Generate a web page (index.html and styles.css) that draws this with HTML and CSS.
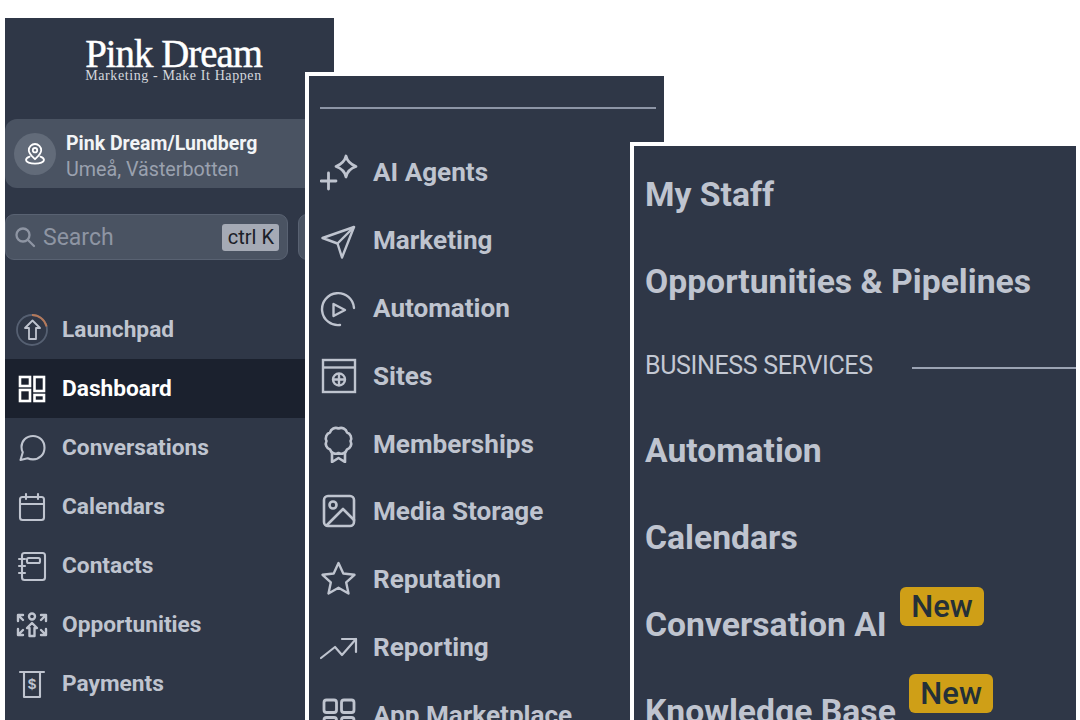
FILE: index.html
```html
<!DOCTYPE html>
<html lang="en">
<head>
    <meta charset="UTF-8">
    <meta name="viewport" content="width=device-width, initial-scale=1.0">
    <title>Pink Dream Menu</title>
    <link rel="stylesheet" href="styles.css">
</head>
<body>
    <!-- first window: top of the sidebar -->
    <div class="panel panel-one">
        <div class="logo">
            <div class="logo-name">Pink Dream</div>
            <div class="logo-tag">Marketing - Make It Happen</div>
        </div>
        <div class="account">
            <div class="account-icon">
                <svg width="22" height="24" viewBox="0 0 22 24" fill="none" stroke="currentColor" stroke-width="1.800" stroke-linecap="round" stroke-linejoin="round">
                    <path d="M11 2a6.200 6.200 0 0 0-6.200 6.200c0 3.600 3.400 6.200 6.200 9 2.800-2.800 6.200-5.400 6.200-9A6.200 6.200 0 0 0 11 2z"/>
                    <circle cx="11" cy="8.200" r="2.200"/>
                    <path d="M5.600 14.600C3.400 15.400 2 16.600 2 18c0 2 4 3.600 9 3.600s9-1.600 9-3.600c0-1.400-1.400-2.600-3.600-3.400"/>
                </svg>
            </div>
            <div class="account-text">
                <div class="account-name">Pink Dream/Lundberg</div>
                <div class="account-place">Umeå, Västerbotten</div>
            </div>
        </div>
        <div class="search-row">
            <div class="search">
                <svg width="24" height="24" viewBox="0 0 24 24" fill="none" stroke="currentColor" stroke-width="2.300" stroke-linecap="round">
                    <circle cx="10" cy="10" r="6.500"/>
                    <path d="M15 15l6 6"/>
                </svg>
                <span class="search-text">Search</span>
                <span class="kbd">ctrl K</span>
            </div>
            <div class="search-btn"></div>
        </div>
        <nav class="nav-one">
            <a class="row-one">
                <svg class="icon" viewBox="0 0 32 32" fill="none" stroke="currentColor" stroke-width="1.800" stroke-linejoin="round">
                    <circle cx="16" cy="16" r="15" stroke="#566072"/>
                    <path d="M16 1a15 15 0 0 1 14.600 11.500" stroke="#b5795a"/>
                    <path d="M16.500 6.500l7.500 7.500h-4v11h-7V14H9z"/>
                </svg>
                Launchpad
            </a>
            <a class="row-one active">
                <svg class="icon" viewBox="0 0 32 32" fill="none" stroke="currentColor" stroke-width="2.600">
                    <rect x="4" y="4" width="10" height="9"/>
                    <rect x="18.500" y="4" width="9.500" height="14"/>
                    <rect x="4" y="17" width="10" height="11"/>
                    <rect x="18.500" y="22" width="9.500" height="6"/>
                </svg>
                Dashboard
            </a>
            <a class="row-one">
                <svg class="icon" viewBox="0 0 32 32" fill="none" stroke="currentColor" stroke-width="2.100" stroke-linejoin="round">
                    <path d="M17 4C10 4 5.500 9 5.500 15c0 2 .5 3.800 1.300 5.300L4.500 28l7.200-1.800c1.600.8 3.400 1.200 5.300 1.200 6.500 0 11.500-5 11.500-11.700S23.500 4 17 4z"/>
                </svg>
                Conversations
            </a>
            <a class="row-one">
                <svg class="icon" viewBox="0 0 32 32" fill="none" stroke="currentColor" stroke-width="2.100" stroke-linecap="round" stroke-linejoin="round">
                    <rect x="4" y="6" width="24" height="23" rx="2.500"/>
                    <path d="M4 13h24M10 3v5M22 3v5"/>
                </svg>
                Calendars
            </a>
            <a class="row-one">
                <svg class="icon" viewBox="0 0 32 32" fill="none" stroke="currentColor" stroke-width="2.100" stroke-linecap="round" stroke-linejoin="round">
                    <rect x="6" y="3" width="23" height="27" rx="2.500"/>
                    <rect x="11" y="8" width="13" height="5" rx="1.500"/>
                    <path d="M3 9h6M3 16h6M3 23h6"/>
                </svg>
                Contacts
            </a>
            <a class="row-one">
                <svg class="icon" viewBox="0 0 32 32" fill="none" stroke="currentColor" stroke-width="2.400" stroke-linecap="round" stroke-linejoin="round">
                    <circle cx="16" cy="7.500" r="3"/>
                    <path d="M16 14l5 5h-2.500v8h-5v-8H11z"/>
                    <path d="M2 12V6h5M2 6l5 5M30 12V6h-5M30 6l-5 5M2 20v6h5M2 26l5-5M30 20v6h-5M30 26l-5-5"/>
                </svg>
                Opportunities
            </a>
            <a class="row-one">
                <svg class="icon" viewBox="0 0 32 32" fill="none" stroke="currentColor" stroke-width="2.100" stroke-linecap="round" stroke-linejoin="round">
                    <path d="M4 4h24M8 4v25h16V4"/>
                    <text x="16" y="21" class="dollar" text-anchor="middle">$</text>
                </svg>
                Payments
            </a>
        </nav>
    </div>

    <!-- second window: middle of the sidebar -->
    <div class="panel panel-two">
        <div class="rule"></div>
        <nav class="nav-two">
            <a class="row-two">
                <svg class="icon-two" viewBox="0 0 38 38" fill="none" stroke="currentColor" stroke-width="2.800" stroke-linecap="round" stroke-linejoin="round">
                    <path d="M26 3c1 4.500 4 8 10 10.500-6 2-9 5.500-10 10.500-1-5-4-8.500-10-10.500C22 11 25 7.500 26 3z"/>
                    <path d="M8.500 20v16M1 28h15"/>
                </svg>
                AI Agents
            </a>
            <a class="row-two">
                <svg class="icon-two" viewBox="0 0 38 38" fill="none" stroke="currentColor" stroke-width="2.400" stroke-linecap="round" stroke-linejoin="round">
                    <path d="M34 6L2.500 17l15 5.500L22 36.500z"/>
                    <path d="M34 6L17.500 22.500"/>
                </svg>
                Marketing
            </a>
            <a class="row-two">
                <svg class="icon-two" viewBox="0 0 38 38" fill="none" stroke="currentColor" stroke-width="2.400" stroke-linecap="round" stroke-linejoin="round">
                    <path d="M34 19A16 16 0 1 0 20 36"/>
                    <path d="M13.500 15l11.500 6-11.500 6z"/>
                </svg>
                Automation
            </a>
            <a class="row-two">
                <svg class="icon-two" viewBox="0 0 38 38" fill="none" stroke="currentColor" stroke-width="2.400">
                    <rect x="3" y="3" width="32" height="32"/>
                    <path d="M3 10.500h32"/>
                    <circle cx="19" cy="22.500" r="6"/>
                    <path d="M13 22.500h12M19 16.500v12"/>
                </svg>
                Sites
            </a>
            <a class="row-two">
                <svg class="icon-two" viewBox="0 0 38 38" fill="none" stroke="currentColor" stroke-width="2.600" stroke-linejoin="round">
                    <path d="M18.500 3.500A6 6 0 0 1 27 7.500 6 6 0 0 1 30.500 16 6 6 0 0 1 27 24.500 6 6 0 0 1 18.500 28 6 6 0 0 1 10 24.500 6 6 0 0 1 6.500 16 6 6 0 0 1 10 7.500 6 6 0 0 1 18.500 3.500z"/>
                    <path d="M12 27v10l6.500-4 6.500 4V27"/>
                </svg>
                Memberships
            </a>
            <a class="row-two">
                <svg class="icon-two" viewBox="0 0 38 38" fill="none" stroke="currentColor" stroke-width="2.600" stroke-linejoin="round" stroke-linecap="round">
                    <rect x="4" y="4" width="30" height="30" rx="4"/>
                    <circle cx="13" cy="13" r="3.500"/>
                    <path d="M7 33l16-16 11 11"/>
                </svg>
                Media Storage
            </a>
            <a class="row-two">
                <svg class="icon-two" viewBox="0 0 38 38" fill="none" stroke="currentColor" stroke-width="2.400" stroke-linejoin="round">
                    <path d="M18.500 3l4.800 10.500 11.200 1.300-8.300 7.600 2.300 11.100-10-5.700-10 5.700 2.300-11.100-8.300-7.600 11.200-1.300z"/>
                </svg>
                Reputation
            </a>
            <a class="row-two">
                <svg class="icon-two" viewBox="0 0 38 38" fill="none" stroke="currentColor" stroke-width="2.200" stroke-linecap="round" stroke-linejoin="round">
                    <path d="M1 30l14-11 7 8 14-16"/>
                    <path d="M22 11h14v13"/>
                </svg>
                Reporting
            </a>
            <a class="row-two">
                <svg class="icon-two" viewBox="0 0 38 38" fill="none" stroke="currentColor" stroke-width="2.800">
                    <rect x="4" y="4" width="12.500" height="12.500" rx="2.500"/>
                    <rect x="21.500" y="4" width="12.500" height="12.500" rx="2.500"/>
                    <rect x="4" y="21.500" width="12.500" height="12.500" rx="2.500"/>
                    <rect x="21.500" y="21.500" width="12.500" height="12.500" rx="2.500"/>
                </svg>
                App Marketplace
            </a>
        </nav>
    </div>

    <!-- third window: settings list -->
    <div class="panel panel-three">
        <a class="row-three">My Staff</a>
        <a class="row-three">Opportunities &amp; Pipelines</a>
        <div class="section">
            <span class="section-name">BUSINESS SERVICES</span>
            <span class="section-line"></span>
        </div>
        <a class="row-three">Automation</a>
        <a class="row-three">Calendars</a>
        <a class="row-three">Conversation AI <span class="badge">New</span></a>
        <a class="row-three">Knowledge Base <span class="badge">New</span></a>
    </div>
</body>
</html>
```

FILE: styles.css
```css
body {
    margin: 0;
    height: 720px;
    overflow: hidden;
    background-color: #ffffff;
    font-family: Roboto, "Liberation Sans", sans-serif;
    position: relative;
}

/* windows sit on a free canvas and overlap */
.panel {
    position: absolute;
    bottom: 0;
    background-color: #2f3747;
    overflow: hidden;
    box-sizing: border-box;
    color: #bfc4cf;
    font-weight: 700;
}
.panel-one { left: 5px; top: 18px; width: 329px; }
.panel-two { left: 309px; top: 76px; width: 355px; outline: 4px solid #ffffff; }
.panel-three { left: 634px; top: 146px; width: 442px; padding: 5px 0 0 11px; outline: 4px solid #ffffff; }

.logo { height: 101px; padding-top: 18px; box-sizing: border-box; text-align: center; color: #ffffff; width: 337px; }
.logo-name { font-family: "Liberation Serif", serif; font-weight: 400; font-size: 41px; line-height: 34px; letter-spacing: -1px; transform: scaleX(.945); -webkit-text-stroke: .5px #ffffff; }
.logo-tag { font-family: "Liberation Serif", serif; font-size: 14px; line-height: 11px; letter-spacing: .6px; color: #d5d8de; font-weight: 400; }

.account {
    height: 69px;
    background-color: #4a5362;
    border-radius: 12px;
    display: flex;
    align-items: center;
    gap: 10px;
    padding-left: 9px;
}
.account-icon {
    width: 42px;
    height: 42px;
    border-radius: 50%;
    background-color: #626b79;
    color: #ffffff;
    display: flex;
    align-items: center;
    justify-content: center;
}
.account-text { padding-top: 6px; }
.account-name { font-size: 19.500px; line-height: 26px; color: #f2f4f6; }
.account-place { font-size: 19.700px; line-height: 26px; font-weight: 400; color: #9aa1af; }

.search-row { display: flex; gap: 10px; margin-top: 26px; height: 46px; }
.search {
    flex: none;
    width: 283px;
    box-sizing: border-box;
    display: flex;
    align-items: center;
    padding: 0 8px 0 7px;
    background-color: #4a5362;
    border: 1px solid #596272;
    border-radius: 9px;
    color: #8e95a3;
}
.search-text { font-size: 23px; font-weight: 400; margin-left: 6px; flex: 1; }
.kbd {
    background-color: #a5aab5;
    color: #1b2028;
    border-radius: 3px;
    font-size: 20px;
    font-weight: 400;
    line-height: 27px;
    padding: 0 5px 0 6px;
}
.search-btn { flex: none; width: 40px; background-color: #4a5362; border: 1px solid #596272; border-radius: 9px; }

.nav-one { margin-top: 40px; }
.row-one {
    height: 59px;
    box-sizing: border-box;
    padding: 0 0 1px 11px;
    display: flex;
    align-items: center;
    gap: 14px;
    font-size: 22.700px;
}
.row-one.active { background-color: #1b212e; color: #ffffff; }
.icon { width: 32px; height: 32px; flex: none; margin-top: 1px; }
.dollar { font-family: "Liberation Mono", monospace; font-size: 15px; font-weight: 700; fill: currentColor; stroke: none; }

.rule { height: 2px; background-color: #8d95a6; margin: 31px 8px 0 11px; }
.nav-two { margin-top: 29.500px; }
.row-two {
    height: 67.800px;
    display: flex;
    align-items: center;
    gap: 15px;
    padding-left: 11px;
    font-size: 26.100px;
}
.icon-two { width: 38px; height: 38px; flex: none; }

.row-three {
    height: 87px;
    display: flex;
    align-items: center;
    gap: 13px;
    font-size: 33.700px;
    white-space: nowrap;
}
.section { height: 82px; box-sizing: border-box; padding-bottom: 2px; display: flex; align-items: center; gap: 39px; font-weight: 400; }
.section-name { font-size: 25px; letter-spacing: -.35px; color: #c3c8d3; white-space: nowrap; }
.section-line { flex: 1; height: 2px; background-color: #9ba3b3; margin-top: 6px; }
.badge {
    background-color: #cf9f17;
    color: #243038;
    font-size: 31px;
    font-weight: 500;
    line-height: 39px;
    padding: 0 11.500px;
    border-radius: 6px;
    margin-bottom: 37px;
}
```
